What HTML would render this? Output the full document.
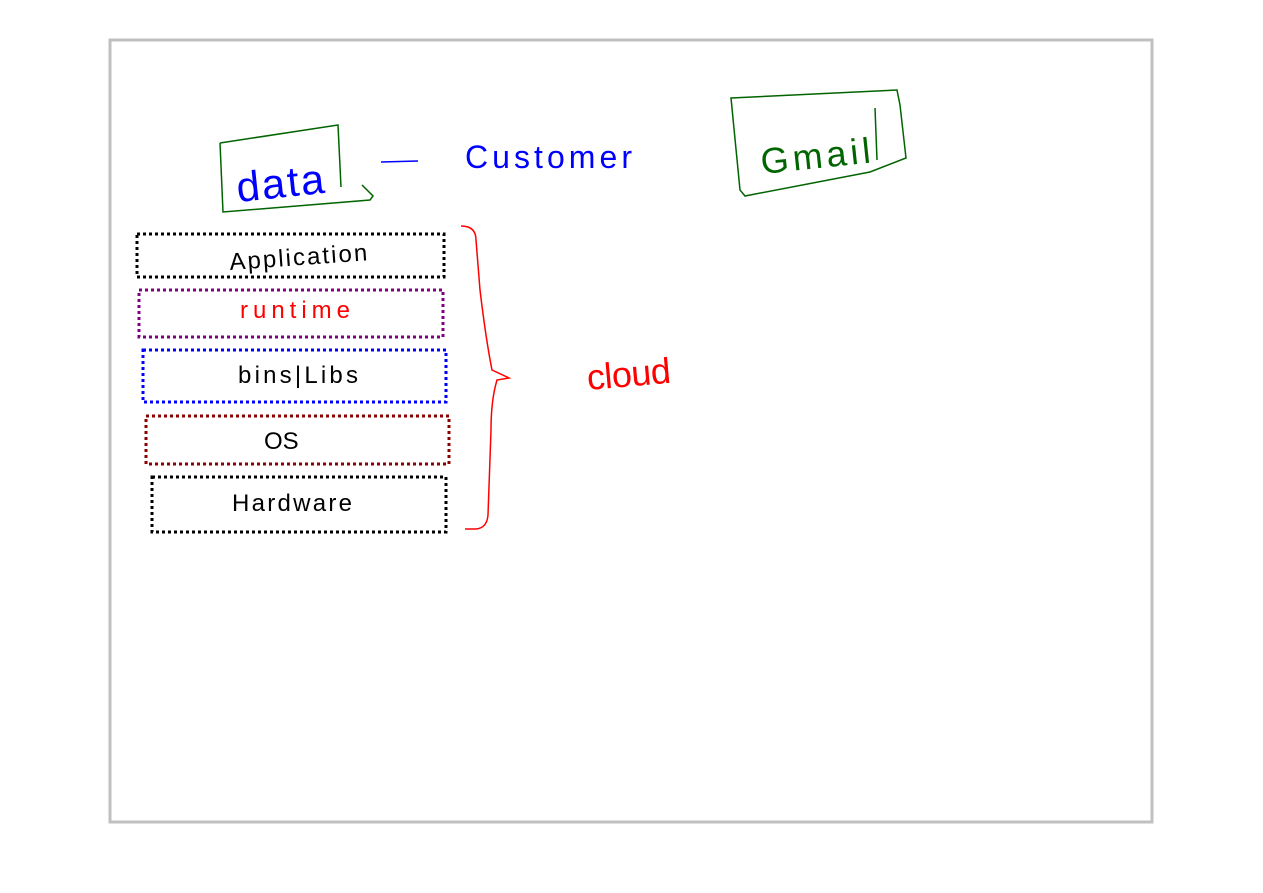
<!DOCTYPE html>
<html><head><style>
html,body{margin:0;padding:0;background:#fff;}
svg{display:block;}
text{font-family:"Liberation Sans",sans-serif;}
</style></head><body>
<svg width="1263" height="893" viewBox="0 0 1263 893" xmlns="http://www.w3.org/2000/svg">
<rect x="0" y="0" width="1263" height="893" fill="#fff"/>
<rect x="110" y="40" width="1042" height="782" fill="none" stroke="#c0c0c0" stroke-width="3"/>

<path d="M220,143 L338,125 L341,187 M220,143 L223,212 L370,200 L373,196 L362,185" fill="none" stroke="#006400" stroke-width="1.5"/>
<text x="238" y="202" font-size="42" fill="#0000ff" textLength="88" transform="rotate(-6 238 202)">data</text>
<path d="M381,162 L418,161" stroke="#0000ff" stroke-width="1.5"/>
<text x="465" y="168" font-size="32" fill="#0000ff" textLength="167">Customer</text>

<path d="M731,98 L897,90 L900,105 L906,158 L870,172 L745,196 L740,190 L731,98 Z" fill="none" stroke="#006400" stroke-width="1.5"/>
<path d="M875,108 L877,160" stroke="#006400" stroke-width="1.5"/>
<text x="762" y="174" font-size="36" fill="#006400" textLength="110" transform="rotate(-6 762 174)">Gmail</text>

<rect x="137" y="234" width="307" height="43" fill="none" stroke="#000" stroke-width="3" stroke-dasharray="3 3"/>
<text x="230" y="270" font-size="24" fill="#000" textLength="138" transform="rotate(-4 230 270)">Application</text>
<rect x="139" y="290" width="304" height="47" fill="none" stroke="#800080" stroke-width="3" stroke-dasharray="3 3"/>
<text x="240" y="318" font-size="24" fill="#ff0000" textLength="110">runtime</text>
<rect x="143" y="350" width="303" height="52" fill="none" stroke="#0000ff" stroke-width="3" stroke-dasharray="3 3"/>
<text x="238" y="383" font-size="24" fill="#000" textLength="120">bins|Libs</text>
<rect x="146" y="416" width="303" height="48" fill="none" stroke="#8b0000" stroke-width="3" stroke-dasharray="3 3"/>
<text x="264" y="449" font-size="24" fill="#000">OS</text>
<rect x="152" y="477" width="294" height="55" fill="none" stroke="#000" stroke-width="3" stroke-dasharray="3 3"/>
<text x="232" y="511" font-size="24" fill="#000" textLength="120">Hardware</text>

<path d="M461,226 Q476,226 476,240 L480,290 Q486,340 492,370 L509,378 L497,380 Q491,400 491,430 L488,515 Q487,528 476,529 L465,529" fill="none" stroke="#ff0000" stroke-width="1.5"/>
<text x="588" y="390" font-size="36" fill="#ff0000" textLength="84" transform="rotate(-5 588 390)">cloud</text>
</svg>
</body></html>
